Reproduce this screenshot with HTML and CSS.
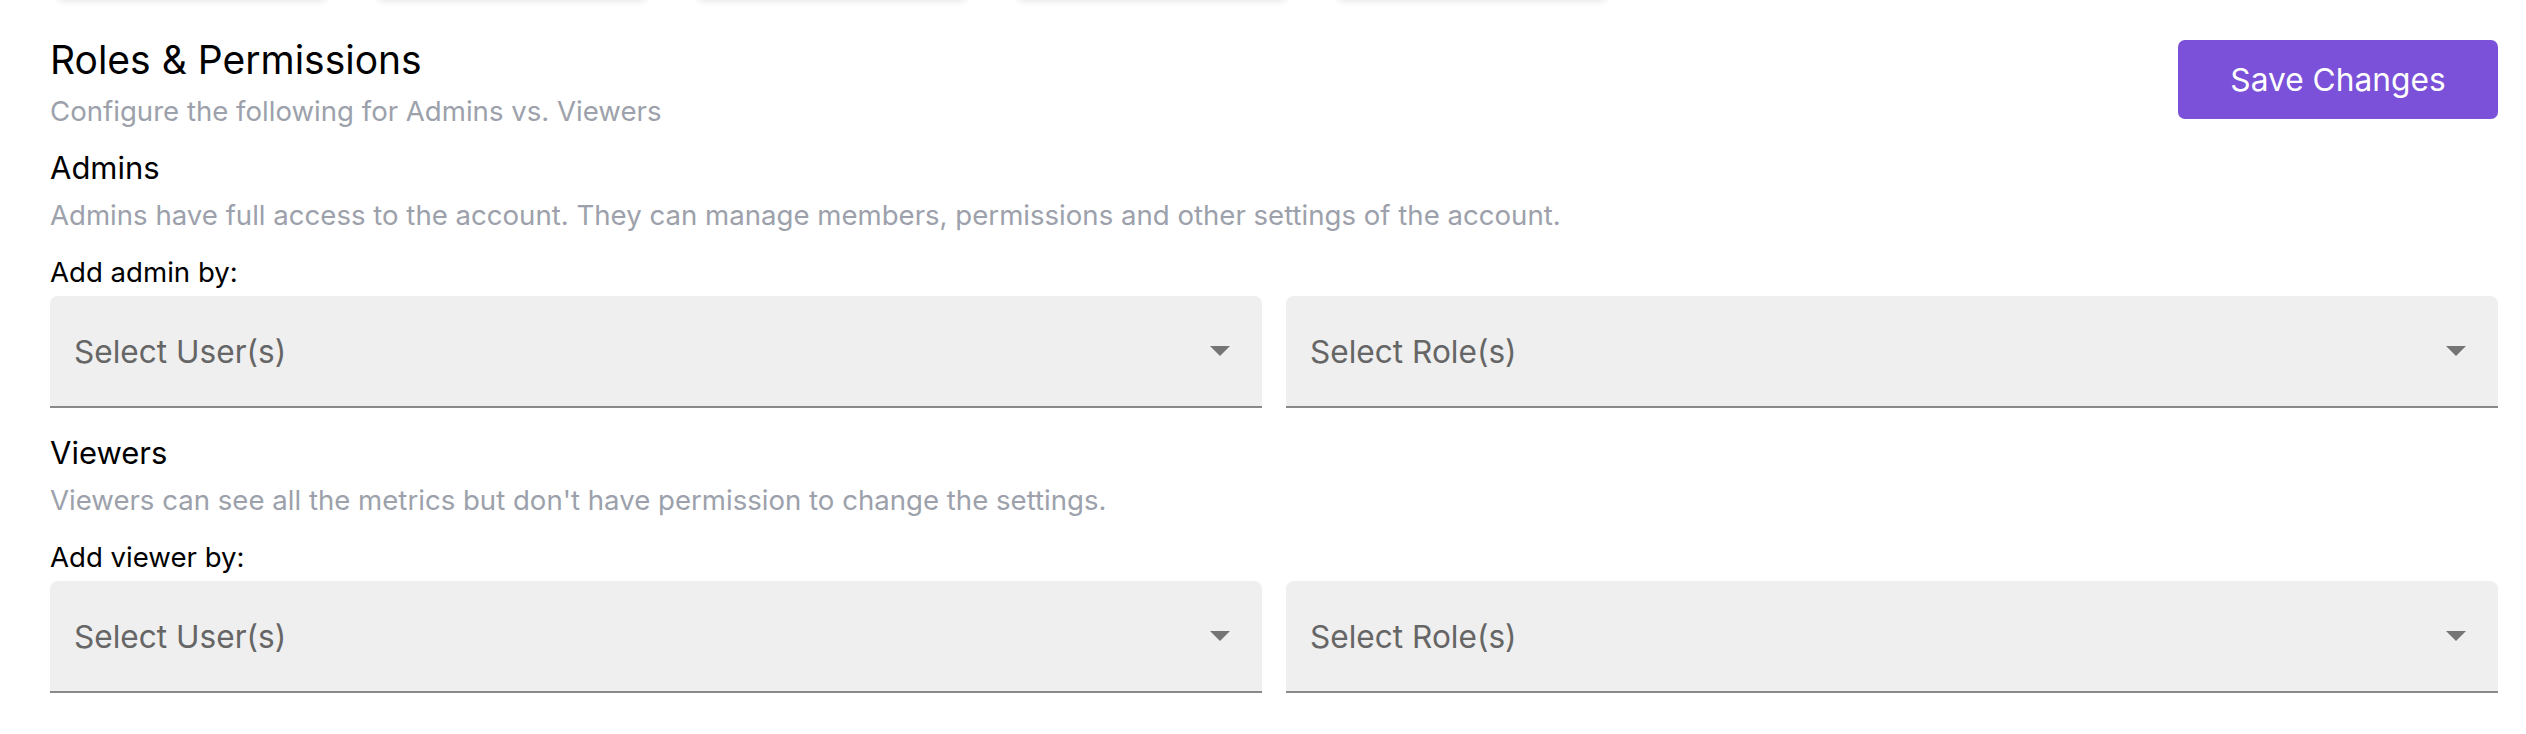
FILE: index.html
```html
<!DOCTYPE html>
<html lang="en">
<head>
<meta charset="utf-8">
<title>Roles &amp; Permissions</title>
<link rel="stylesheet" href="styles.css">
</head>
<body>
<div class="tabs">
  <div class="tab"></div>
  <div class="tab"></div>
  <div class="tab"></div>
  <div class="tab"></div>
  <div class="tab"></div>
</div>
<main class="page">
  <header class="header">
    <div class="header-text">
      <h1 class="title">Roles &amp; Permissions</h1>
      <p class="subtitle">Configure the following for Admins vs. Viewers</p>
    </div>
    <button class="save-btn" type="button">Save Changes</button>
  </header>

  <section class="section">
    <h2 class="section-title">Admins</h2>
    <p class="section-desc">Admins have full access to the account. They can manage members, permissions and other settings of the account.</p>
    <div class="field-label">Add admin by:</div>
    <div class="selects">
      <div class="select"><span class="placeholder">Select User(s)</span><span class="arrow"></span></div>
      <div class="select"><span class="placeholder">Select Role(s)</span><span class="arrow"></span></div>
    </div>
  </section>

  <section class="section">
    <h2 class="section-title">Viewers</h2>
    <p class="section-desc">Viewers can see all the metrics but don't have permission to change the settings.</p>
    <div class="field-label">Add viewer by:</div>
    <div class="selects">
      <div class="select"><span class="placeholder">Select User(s)</span><span class="arrow"></span></div>
      <div class="select"><span class="placeholder">Select Role(s)</span><span class="arrow"></span></div>
    </div>
  </section>
</main>
</body>
</html>
```
FILE: styles.css
```css
* { box-sizing: border-box; }

html, body {
  margin: 0;
  padding: 0;
  background: #ffffff;
  font-family: Inter, "Noto Sans", "Liberation Sans", sans-serif;
  color: #000;
}

.tabs {
  display: flex;
  gap: 48px;
  padding-left: 56px;
  margin-top: -60px;
  height: 60px;
}

.tab {
  width: 272px;
  height: 60px;
  background: #fff;
  border-radius: 8px;
  box-shadow: 0 2px 6px rgba(0, 0, 0, 0.09);
}

.page {
  padding: 0 28px 40px 50px;
}

.header {
  display: flex;
  justify-content: space-between;
  align-items: flex-start;
}

.title {
  margin: 38px 0 0;
  font-size: 39px;
  line-height: 44px;
  font-weight: 400;
  color: #000;
}

.subtitle {
  margin: 12px 0 0;
  font-size: 27.6px;
  line-height: 34px;
  color: #9ca1ab;
}

.save-btn {
  margin-top: 40px;
  width: 320px;
  height: 79px;
  border: none;
  border-radius: 7px;
  background: #7a51d8;
  color: #fff;
  font-family: inherit;
  font-size: 31.7px;
  font-weight: 400;
}

.section {
  margin-top: 21px;
}

.section + .section {
  margin-top: 26px;
}

.section-title {
  margin: 0;
  font-size: 31px;
  line-height: 38px;
  font-weight: 400;
  color: #000;
}

.section-desc {
  margin: 11px 0 0;
  font-size: 27.6px;
  line-height: 34px;
  color: #9ca1ab;
}

.field-label {
  margin-top: 23px;
  font-size: 27.6px;
  line-height: 34px;
  color: #000;
}

.selects {
  margin-top: 7px;
  display: grid;
  grid-template-columns: 1fr 1fr;
  gap: 24px;
}

.select {
  height: 112px;
  background: #efefef;
  border-bottom: 2px solid #898989;
  border-radius: 8px 8px 0 0;
  display: flex;
  align-items: center;
  justify-content: space-between;
  padding: 0 32px 0 24px;
}

.placeholder {
  font-size: 31.6px;
  color: #666;
}

.arrow {
  width: 0;
  height: 0;
  border-left: 10px solid transparent;
  border-right: 10px solid transparent;
  border-top: 10px solid #757575;
}
```
